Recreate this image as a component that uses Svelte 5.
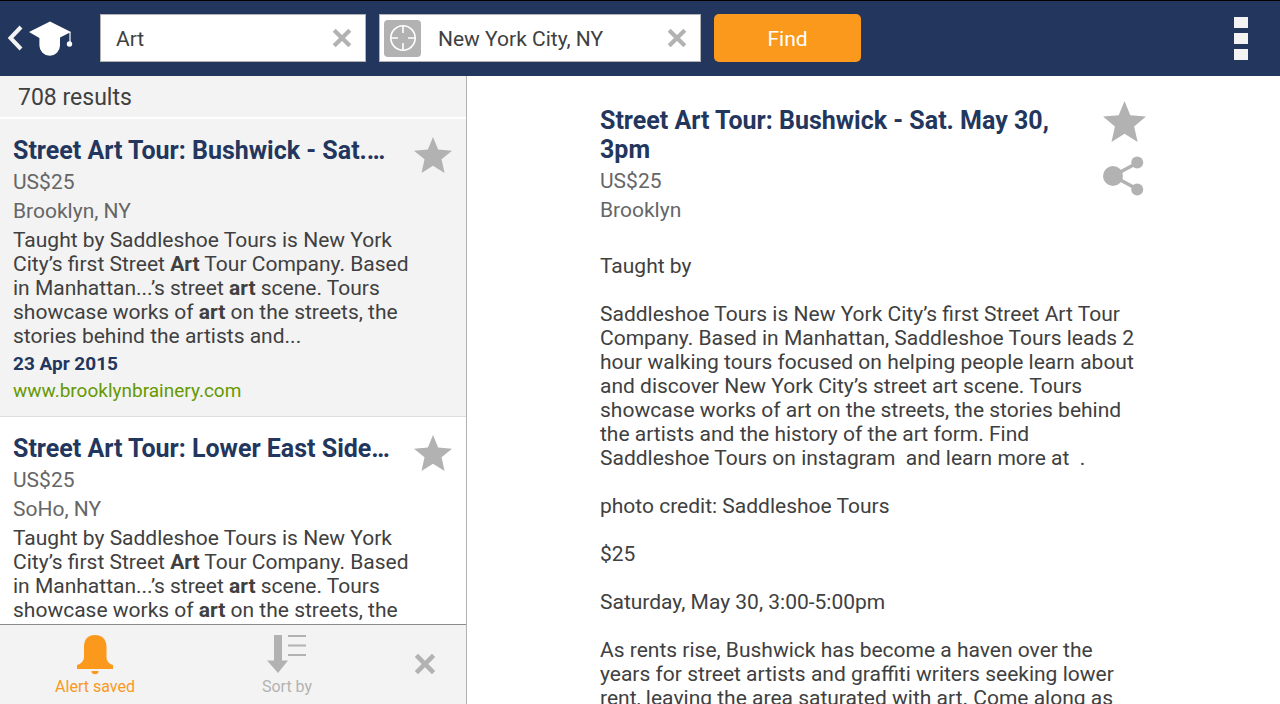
<script>
  let query = 'Art';
  let place = 'New York City, NY';

  const results = [
    {
      id: 1,
      title: 'Street Art Tour: Bushwick - Sat.…',
      price: 'US$25',
      area: 'Brooklyn, NY',
      date: '23 Apr 2015',
      site: 'www.brooklynbrainery.com',
      active: true
    },
    {
      id: 2,
      title: 'Street Art Tour: Lower East Side…',
      price: 'US$25',
      area: 'SoHo, NY',
      date: '23 Apr 2015',
      site: 'www.brooklynbrainery.com',
      active: false
    }
  ];

  const paragraphs = [
    'Taught by',
    'Saddleshoe Tours is New York City’s first Street Art Tour Company. Based in Manhattan, Saddleshoe Tours leads 2 hour walking tours focused on helping people learn about and discover New York City’s street art scene. Tours showcase works of art on the streets, the stories behind the artists and the history of the art form. Find Saddleshoe Tours on instagram  and learn more at  .',
    'photo credit: Saddleshoe Tours',
    '$25',
    'Saturday, May 30, 3:00-5:00pm',
    'As rents rise, Bushwick has become a haven over the years for street artists and graffiti writers seeking lower rent, leaving the area saturated with art. Come along as'
  ];
</script>

{#snippet cross(size)}
  <svg viewBox="0 0 20 20" width={size} height={size} aria-hidden="true">
    <path d="M2.2 2.2 17.8 17.8M17.8 2.2 2.2 17.8" fill="none" stroke="currentColor" stroke-width="4.2" />
  </svg>
{/snippet}

{#snippet star(size)}
  <svg viewBox="0 0 43 41" width={size} height={size} aria-hidden="true">
    <path d="M21.5 0 27.3 14.3 43 15.6 31.2 25.4 34.6 41 21.5 32.8 8.5 41 11.9 25.4 0 15.6 15.7 14.3Z" fill="currentColor" />
  </svg>
{/snippet}

<div class="page">
  <header>
    <button type="button" class="home" aria-label="Back">
      <svg viewBox="0 0 66 36" width="66" height="36" aria-hidden="true">
        <path d="M14 7 3.5 18 14 29" fill="none" stroke="#f3f3f3" stroke-width="4" />
        <path d="M43 1.5 64 12 53 17.5V25.500a10.300 10.300 0 0 1-20.600 0V18L22 12Z" fill="#fff" />
        <path d="M63 12V24" stroke="#fff" stroke-width="1.2" />
        <circle cx="62.5" cy="24" r="2.7" fill="#fff" />
      </svg>
    </button>

    <form class="search" on:submit|preventDefault>
      <div class="field what">
        <input type="text" aria-label="Keywords" bind:value={query} />
        <button type="button" class="clear" aria-label="Clear keywords" on:click={() => (query = '')}>
          {@render cross(20)}
        </button>
      </div>

      <div class="field where">
        <button type="button" class="locate" aria-label="Use my location">
          <svg viewBox="0 0 28 28" width="28" height="28" fill="none" stroke="#fff" stroke-width="1.6" aria-hidden="true">
            <circle cx="14" cy="14" r="12.2" />
            <path d="M14 2v7M14 19v7M2 14h7M19 14h7" />
          </svg>
        </button>
        <input type="text" aria-label="Location" bind:value={place} />
        <button type="button" class="clear" aria-label="Clear location" on:click={() => (place = '')}>
          {@render cross(20)}
        </button>
      </div>

      <button type="submit" class="find">Find</button>
    </form>

    <button type="button" class="more" aria-label="More options">
      <span></span><span></span><span></span>
    </button>
  </header>

  <div class="columns">
    <aside>
      <p class="count">708 results</p>

      <div class="list">
        {#each results as r (r.id)}
          <article class="result" class:active={r.active}>
            <div class="top">
              <div class="summary">
                <h2>{r.title}</h2>
                <p class="meta">{r.price}</p>
                <p class="meta">{r.area}</p>
              </div>
              <button type="button" class="icon" aria-label="Save {r.title}">{@render star(38)}</button>
            </div>
            <p class="text">
              Taught by Saddleshoe Tours is New York City’s first Street <b>Art</b> Tour Company. Based in
              Manhattan...’s street <b>art</b> scene. Tours showcase works of <b>art</b> on the streets, the
              stories behind the artists and...
            </p>
            <p class="date">{r.date}</p>
            <a class="site" href="#result-{r.id}">{r.site}</a>
          </article>
        {/each}
      </div>

      <nav class="tools">
        <button type="button" class="tool alert">
          <svg viewBox="0 0 36 40" width="36" height="40" fill="currentColor" aria-hidden="true">
            <path d="M7 12C7 4 11 0 18 0s11.500 4 11.500 12v10c0 4 2.500 7 6.500 8v4H0v-4c4-1 7-4 7-8Z" />
            <path d="M14.500 36h7a3.500 3.300 0 0 1-7 0Z" />
          </svg>
          Alert saved
        </button>
        <button type="button" class="tool sort">
          <svg viewBox="0 0 40 40" width="40" height="40" fill="currentColor" aria-hidden="true">
            <path d="M7 0h8v25.500h6L11 38 0 25.500h7Z" />
            <path d="M21 0h18v2H21zM21 9.500h18v2H21zM21 19h18v2H21z" />
          </svg>
          Sort by
        </button>
        <button type="button" class="tool close" aria-label="Close">{@render cross(22)}</button>
      </nav>
    </aside>

    <main>
      <div class="detail">
        <div class="top">
          <div class="summary">
            <h1>Street Art Tour: Bushwick - Sat. May 30, 3pm</h1>
            <p class="meta">US$25</p>
            <p class="meta">Brooklyn</p>
          </div>
          <div class="actions">
            <button type="button" class="icon" aria-label="Save">{@render star(43)}</button>
            <button type="button" class="icon" aria-label="Share">
              <svg viewBox="0 0 43 40" width="43" height="40" aria-hidden="true">
                <path d="M35 6.500 10 20 35 33.500" fill="none" stroke="currentColor" stroke-width="3.500" />
                <circle cx="10" cy="20" r="10" fill="currentColor" />
                <circle cx="34.200" cy="6.600" r="6" fill="currentColor" />
                <circle cx="34.200" cy="33.400" r="6" fill="currentColor" />
              </svg>
            </button>
          </div>
        </div>
        <div class="body">
          {#each paragraphs as p}
            <p class="text">{p}</p>
          {/each}
        </div>
      </div>
    </main>
  </div>
</div>

<style>
  :global(body) {
    margin: 0;
    background: #fff;
  }
  .page {
    display: flex;
    flex-direction: column;
    height: 100vh;
    font-family: Roboto, "Liberation Sans", sans-serif;
    font-size: 21px;
    color: #404040;
  }
  h1, h2, p { margin: 0; }
  button {
    display: flex;
    align-items: center;
    justify-content: center;
    padding: 0;
    border: 0;
    background: none;
    color: #b2b2b2;
    font: inherit;
    cursor: pointer;
  }
  svg { display: block; }

  header {
    flex: none;
    display: flex;
    align-items: center;
    box-sizing: border-box;
    height: 76px;
    padding: 0 32px 1px 7px;
    background: #23365d;
    border-top: 1px solid #000;
  }
  .search {
    flex: 1;
    display: flex;
    gap: 13px;
    margin-left: 27px;
  }
  .field {
    display: flex;
    align-items: center;
    box-sizing: border-box;
    height: 48px;
    padding-right: 13px;
    background: #fff;
    border: 1px solid #b2b2b2;
  }
  .what { width: 266px; padding-left: 15px; }
  .where { width: 322px; padding-left: 4px; }
  .field input {
    flex: 1;
    min-width: 0;
    padding: 2px 0 0;
    border: 0;
    outline: 0;
    background: none;
    font: inherit;
    color: inherit;
  }
  .clear { padding-bottom: 1px; }
  .locate {
    width: 37px;
    height: 37px;
    margin-right: 17px;
    border-radius: 4px;
    background: #b2b2b2;
  }
  .find {
    box-sizing: border-box;
    width: 147px;
    height: 48px;
    padding-top: 2px;
    border-radius: 5px;
    background: #fa991c;
    color: #fff;
  }
  .more {
    flex-direction: column;
    gap: 5px;
  }
  .more span {
    width: 14px;
    height: 11px;
    background: #f3f3f3;
  }

  .columns {
    flex: 1;
    display: flex;
    min-height: 0;
  }
  aside {
    flex: none;
    display: flex;
    flex-direction: column;
    width: 466px;
    border-right: 1px solid #b2b2b2;
  }
  .count {
    flex: none;
    padding: 2px 18px 0;
    background: #f3f3f3;
    border-bottom: 2px solid #fff;
    font-size: 23px;
    line-height: 39px;
  }
  .list {
    flex: 1;
    min-height: 0;
    overflow: hidden;
  }
  .result {
    padding: 17px 14px 12px 13px;
    border-bottom: 1px solid #ddd;
  }
  .result.active { background: #f3f3f3; }
  .top {
    display: flex;
    align-items: flex-start;
    justify-content: space-between;
  }
  .summary { min-width: 0; }
  h1, h2 {
    margin-bottom: 3px;
    font-size: 25px;
    line-height: 29px;
    font-weight: 700;
    color: #23365d;
  }
  h2 { white-space: nowrap; }
  .meta {
    line-height: 29px;
    color: #666;
  }
  .text { line-height: 24px; }
  .result .text {
    max-width: 408px;
    margin: 2px 0;
  }
  .date {
    font-size: 19px;
    line-height: 27px;
    font-weight: 700;
    color: #23365d;
  }
  .site {
    display: block;
    font-size: 19px;
    line-height: 27px;
    color: #669900;
    text-decoration: none;
  }

  .tools {
    flex: none;
    display: flex;
    height: 79px;
    background: #f3f3f3;
    border-top: 1px solid #8c8c8c;
  }
  .tool {
    flex-direction: column;
    gap: 2px;
    font-size: 16px;
    line-height: 20px;
  }
  .alert, .sort { padding-top: 2px; }
  .alert { width: 190px; color: #fa991c; }
  .sort { width: 194px; }
  .close { width: 82px; padding-bottom: 2px; }

  main {
    flex: 1;
    min-width: 0;
    padding: 0 24px;
    overflow: hidden;
  }
  .detail {
    max-width: 547px;
    margin: 0 auto;
    padding-top: 30px;
  }
  .detail .summary {
    max-width: 460px;
  }
  .actions {
    display: flex;
    flex-direction: column;
    gap: 13px;
    margin: -6px 1px 0 0;
  }
  .body {
    display: flex;
    flex-direction: column;
    gap: 24px;
    max-width: 542px;
    margin-top: 29px;
    white-space: pre-wrap;
  }
</style>
